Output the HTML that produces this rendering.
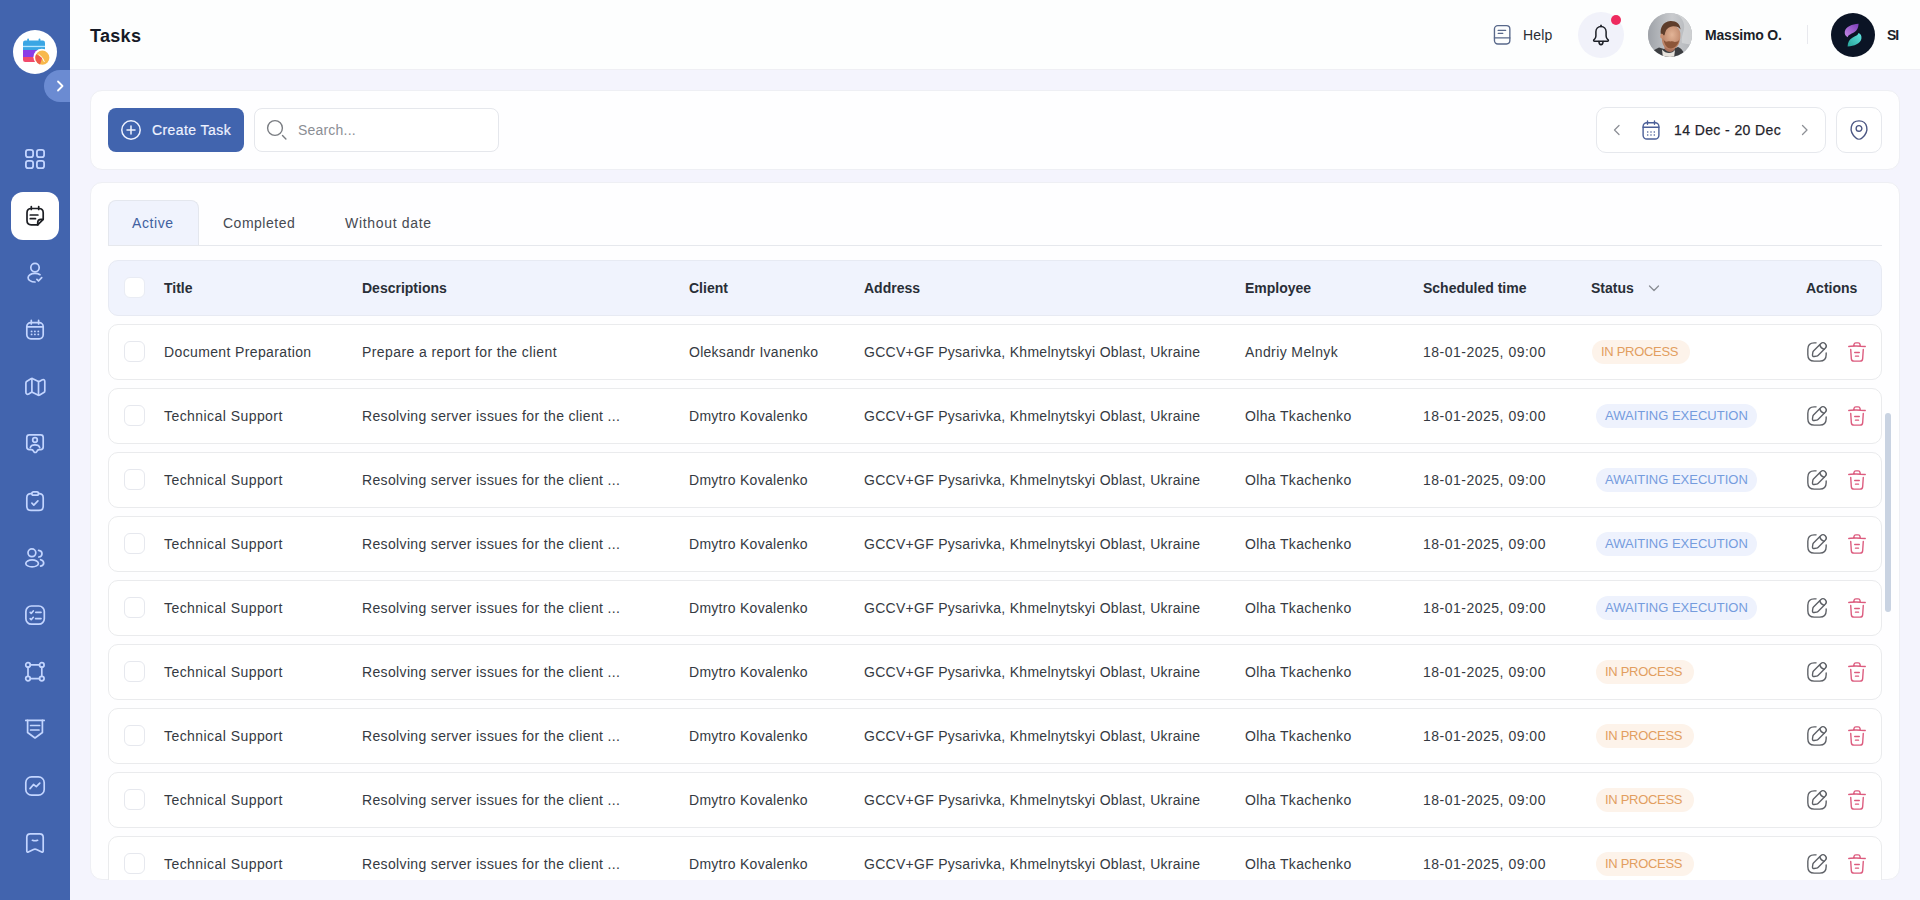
<!DOCTYPE html>
<html>
<head>
<meta charset="utf-8">
<style>
*{box-sizing:border-box;margin:0;padding:0}
html,body{width:1920px;height:900px;overflow:hidden;-webkit-font-smoothing:antialiased}
body{font-family:"Liberation Sans",sans-serif;background:#f4f4fd;position:relative;color:#2b2f36}
.abs{position:absolute}
svg{display:block;overflow:visible}
/* sidebar */
#sb{position:absolute;left:0;top:0;width:70px;height:900px;background:#4264ae}
#logo{position:absolute;left:13px;top:30px;width:44px;height:44px;border-radius:50%;background:#fff}
#tog{position:absolute;left:44px;top:70px;width:26px;height:32px;border-radius:16px 0 0 16px;background:#6b8bd2}
.nav{position:absolute;left:23px;width:24px;height:24px}
#act{position:absolute;left:11px;top:192px;width:48px;height:48px;border-radius:12px;background:#fff}
/* header */
#hd{position:absolute;left:70px;top:0;width:1850px;height:70px;background:#fdfefe;border-bottom:1px solid #efeff4}
.t{position:absolute;white-space:nowrap;line-height:20px}
/* cards */
.card{position:absolute;background:#fefeff;border:1px solid #eeeff4;border-radius:12px}
.btn{position:absolute;border-radius:8px}
.row{position:absolute;left:108px;width:1774px;height:56px;border:1px solid #eaebed;border-radius:10px;background:#fff}
.cb{position:absolute;left:15px;top:16px;width:21px;height:21px;border:1px solid #e6e8ee;border-radius:6px;background:#fff}
.cell{position:absolute;top:17px;line-height:20px;font-size:14px;letter-spacing:.35px;color:#353a42;white-space:nowrap}
.hcell{position:absolute;top:17px;line-height:20px;font-size:14px;font-weight:700;color:#292e37;white-space:nowrap}
.badge{position:absolute;top:15px;height:24px;border-radius:12px;font-size:13px;line-height:24px;white-space:nowrap}
.inp{background:#fdf3ea;color:#e29e60;letter-spacing:-.3px}
.awt{background:#eef2fd;color:#759cdd}
.ed{position:absolute;left:1697px;top:16px;width:22px;height:22px}
.dl{position:absolute;left:1737px;top:16px;width:22px;height:22px}
</style>
</head>
<body>

<!-- SIDEBAR -->
<div id="sb">
  <div id="logo">
    <svg width="44" height="44" viewBox="0 0 44 44">
      <clipPath id="calclip"><rect x="10" y="10.5" width="22" height="21.5" rx="2.2"/></clipPath>
      <g clip-path="url(#calclip)">
        <rect x="10" y="10" width="22" height="10" fill="#3aa6e4"/>
        <rect x="10" y="20" width="22" height="7" fill="#8b3de6"/>
        <rect x="10" y="27" width="22" height="6" fill="#f24a6c"/>
        <rect x="10" y="15.8" width="22" height="1.3" fill="#b4e6ff"/>
      </g>
      <rect x="14.2" y="8.6" width="1.8" height="4.4" rx=".9" fill="#3aa6e4"/>
      <rect x="25.6" y="8.6" width="1.8" height="4.4" rx=".9" fill="#3aa6e4"/>
      <circle cx="28.8" cy="27.2" r="8.4" fill="#fff"/>
      <circle cx="29.3" cy="27.7" r="7.1" fill="#f8b94c"/>
      <path d="M29.3 27.7 L23.2 24.2 A7.1 7.1 0 0 0 27 34.4 Z" fill="#ee5b4b"/>
      <path d="M25.8 24.5 L29.3 27.7 L31.2 31.5" stroke="#fff" stroke-width="1" fill="none" stroke-linecap="round"/>
    </svg>
  </div>
  <div id="tog">
    <svg width="26" height="32" viewBox="0 0 26 32"><path d="M14 11.5 L18.5 16 L14 20.5" stroke="#fff" stroke-width="1.8" fill="none" stroke-linecap="round" stroke-linejoin="round"/></svg>
  </div>
  <div id="act"></div>
  <!-- grid -->
  <svg class="nav" style="top:147px" viewBox="0 0 24 24" fill="none" stroke="#c3d5ff" stroke-width="1.8">
    <rect x="2.9" y="2.9" width="7.2" height="7.2" rx="2.2"/><rect x="13.9" y="2.9" width="7.2" height="7.2" rx="2.2"/>
    <rect x="2.9" y="13.9" width="7.2" height="7.2" rx="2.2"/><rect x="13.9" y="13.9" width="7.2" height="7.2" rx="2.2"/>
  </svg>
  <!-- tasks (active) -->
  <svg class="nav" style="top:204px" viewBox="0 0 24 24" fill="none" stroke="#1d1f24" stroke-width="1.7" stroke-linecap="round" stroke-linejoin="round">
    <path d="M8.3 2.6v2.8M15.7 2.6v2.8"/>
    <path d="M20.2 15.3V8.7c0-2.7-1.5-4.2-4.2-4.2H8.2C5.5 4.5 4 6 4 8.7v7.9c0 2.7 1.5 4.3 4.2 4.3h6.5"/>
    <path d="M20.2 15.3l-5.5 5.6v-2.2c0-2 1.3-3.4 3.3-3.4z"/>
    <path d="M7.3 11h7.6M7.3 14.7h5.2"/>
  </svg>
  <!-- user tick -->
  <svg class="nav" style="top:261px" viewBox="0 0 24 24" fill="none" stroke="#c3d5ff" stroke-width="1.7" stroke-linecap="round" stroke-linejoin="round">
    <circle cx="12" cy="6.6" r="4.2"/>
    <path d="M12 21c-1.9 0-3.7-.5-5.1-1.4-2.4-1.6-2.4-4.3 0-5.9 2.8-1.8 7.3-1.8 10.1 0"/>
    <path d="M13.9 18.3l1.6 1.7 3.2-3.4"/>
  </svg>
  <!-- calendar -->
  <svg class="nav" style="top:318px" viewBox="0 0 24 24" fill="none" stroke="#c3d5ff" stroke-width="1.7" stroke-linecap="round" stroke-linejoin="round">
    <rect x="3.8" y="4.6" width="16.4" height="16.2" rx="4"/>
    <path d="M3.8 8.9h16.4M8.3 2.4v3.6M15.6 2.4v3.6"/>
    <path d="M8.6 13.4h.01M11.9 13.4h.01M15.3 13.4h.01M8.6 16.4h.01M11.9 16.4h.01M15.3 16.4h.01" stroke-width="1.9"/>
  </svg>
  <!-- map -->
  <svg class="nav" style="top:375px" viewBox="0 0 24 24" fill="none" stroke="#c3d5ff" stroke-width="1.7" stroke-linecap="round" stroke-linejoin="round">
    <path d="M2.9 7.9v9.3c0 1.8 1.3 2.6 2.9 1.7l2.2-1.3c.5-.3 1.3-.3 1.8-.1l5.1 2.6c.5.3 1.3.2 1.8-.1l4.1-2.4c.5-.3 1-1 1-1.7V6.6c0-1.8-1.3-2.6-2.9-1.7l-2.2 1.3c-.5.3-1.3.3-1.8.1L9.8 3.7c-.5-.3-1.3-.2-1.8.1L3.9 6.2c-.5.3-1 1-1 1.7z"/>
    <path d="M8.9 3.9v13.3M15.5 6.5v13.6"/>
  </svg>
  <!-- contact -->
  <svg class="nav" style="top:432px" viewBox="0 0 24 24" fill="none" stroke="#c3d5ff" stroke-width="1.7" stroke-linecap="round" stroke-linejoin="round">
    <path d="M6.4 2.9h11.2c1.6 0 2.6 1 2.6 2.6v9.5c0 1.6-1 2.6-2.6 2.6h-1.5c-.7 0-1.2.3-1.6.8l-1.1 1.5c-.6.8-1.7.8-2.3 0l-1.1-1.5c-.4-.5-.9-.8-1.6-.8H6.4c-1.6 0-2.6-1-2.6-2.6V5.5c0-1.6 1-2.6 2.6-2.6z"/>
    <circle cx="12" cy="8" r="2.3"/>
    <path d="M7.3 15.6c.4-1.8 2.3-2.8 4.7-2.8s4.3 1 4.7 2.8"/>
  </svg>
  <!-- clipboard -->
  <svg class="nav" style="top:489px" viewBox="0 0 24 24" fill="none" stroke="#c3d5ff" stroke-width="1.7" stroke-linecap="round" stroke-linejoin="round">
    <path d="M8.5 4.6H8C5.3 4.6 3.8 6.1 3.8 8.8v8.4c0 2.7 1.5 4.2 4.2 4.2h8c2.7 0 4.2-1.5 4.2-4.2V8.8c0-2.7-1.5-4.2-4.2-4.2h-.5"/>
    <rect x="8.8" y="2.8" width="6.8" height="3.4" rx="1.7"/>
    <path d="M8.9 14.2l1.9 1.9 4.1-4.3"/>
  </svg>
  <!-- users -->
  <svg class="nav" style="top:546px" viewBox="0 0 24 24" fill="none" stroke="#c3d5ff" stroke-width="1.7" stroke-linecap="round" stroke-linejoin="round">
    <circle cx="8.9" cy="6.8" r="3.9"/>
    <ellipse cx="9.1" cy="17.4" rx="6.3" ry="3.5"/>
    <path d="M15.6 4.4c2.1.3 3.4 1.6 3.4 3.3s-1.3 3-3.2 3.3"/>
    <path d="M17.6 13.7c1.9.5 3.1 1.7 3.1 3.2s-1.2 2.7-3.1 3.2"/>
  </svg>
  <!-- checklist -->
  <svg class="nav" style="top:603px" viewBox="0 0 24 24" fill="none" stroke="#c3d5ff" stroke-width="1.7" stroke-linecap="round" stroke-linejoin="round">
    <rect x="2.9" y="3" width="18.4" height="18.2" rx="5.5"/>
    <path d="M12.8 9.3h5.2M12.6 15.6h5.4M7.2 9.4l1 1 2.1-2.4M7.2 15.7l1 1 2.1-2.4"/>
  </svg>
  <!-- shape -->
  <svg class="nav" style="top:660px" viewBox="0 0 24 24" fill="none" stroke="#c3d5ff" stroke-width="1.7" stroke-linecap="round" stroke-linejoin="round">
    <circle cx="5" cy="4.9" r="2.3"/><circle cx="18.8" cy="4.9" r="2.3"/>
    <circle cx="5" cy="18.6" r="2.3"/><circle cx="18.8" cy="18.6" r="2.3"/>
    <path d="M7.3 4.9h9.2M7.3 18.6h9.2M5 7.2v9.1M18.8 7.2v9.1"/>
  </svg>
  <!-- badge -->
  <svg class="nav" style="top:717px" viewBox="0 0 24 24" fill="none" stroke="#c3d5ff" stroke-width="1.7" stroke-linecap="round" stroke-linejoin="round">
    <path d="M2.8 3.4h18.4"/>
    <path d="M4.6 3.4v12.1l7.4 5.5 7.4-5.5V3.4"/>
    <path d="M7.6 8.5h9M7.6 13h8.4"/>
  </svg>
  <!-- chart -->
  <svg class="nav" style="top:774px" viewBox="0 0 24 24" fill="none" stroke="#c3d5ff" stroke-width="1.7" stroke-linecap="round" stroke-linejoin="round">
    <rect x="2.8" y="2.8" width="18.4" height="18.4" rx="5.8"/>
    <path d="M7 14.6l3.5-4.1 2.8 2.2 3.5-3.5"/>
  </svg>
  <!-- bookmark -->
  <svg class="nav" style="top:831px" viewBox="0 0 24 24" fill="none" stroke="#c3d5ff" stroke-width="1.7" stroke-linecap="round" stroke-linejoin="round">
    <path d="M7.3 2.8h9.4c2.3 0 3.5 1.2 3.5 3.5v13.8c0 .9-.7 1.3-1.5.9l-5.2-2.6c-1-.5-2-.5-3 0l-5.2 2.6c-.8.4-1.5 0-1.5-.9V6.3c0-2.3 1.2-3.5 3.5-3.5z"/>
    <path d="M9.4 9.3c1.7.6 3.5.6 5.2 0"/>
  </svg>
</div>

<!-- HEADER -->
<div id="hd">
  <div class="t" style="left:20px;top:26px;font-size:18px;font-weight:700;color:#161a26;letter-spacing:.3px">Tasks</div>
  <!-- help -->
  <svg class="abs" style="left:1422px;top:23px" width="24" height="24" viewBox="0 0 24 24" fill="none" stroke="#58688a" stroke-width="1.35" stroke-linecap="round">
    <rect x="2.45" y="2.65" width="15.4" height="18.3" rx="3.4"/>
    <path d="M2.45 14.9h15.4M6.2 7.4h7.4M6.2 10.3h4.6"/>
  </svg>
  <div class="t" style="left:1453px;top:25px;font-size:14px;color:#2a2d33;letter-spacing:.2px">Help</div>
  <!-- bell -->
  <div class="abs" style="left:1508px;top:12px;width:46px;height:46px;border-radius:50%;background:#f1f2fa"></div>
  <svg class="abs" style="left:1519px;top:23px" width="24" height="24" viewBox="0 0 24 24" fill="none" stroke="#1c1f26" stroke-width="1.5" stroke-linecap="round" stroke-linejoin="round">
    <path d="M12 2.2v1.2"/>
    <path d="M12 3.4c-2.9 0-5.1 2.4-5.1 5.4v4.3c0 1.1-.4 2.1-1.2 2.9l-.8.8c-.6.6-.2 1.4.6 1.4h13c.8 0 1.2-.8.6-1.4l-.8-.8c-.8-.8-1.2-1.8-1.2-2.9V8.8c0-3-2.2-5.4-5.1-5.4z"/>
    <path d="M9.9 18.4c.1 1.9 1 3.4 2.1 3.4s2-1.5 2.1-3.4"/>
  </svg>
  <div class="abs" style="left:1541px;top:15px;width:10px;height:10px;border-radius:50%;background:#ee2a5e"></div>
  <!-- avatar -->
  <div class="abs" style="left:1578px;top:13px;width:44px;height:44px;border-radius:50%;overflow:hidden;background:#b9bcc0">
    <svg width="44" height="44" viewBox="0 0 44 44">
      <defs>
        <linearGradient id="av" x1="0" y1="0" x2="1" y2="0"><stop offset="0" stop-color="#9ea2a8"/><stop offset=".55" stop-color="#c9cbce"/><stop offset="1" stop-color="#b2b5b9"/></linearGradient>
        <radialGradient id="face" cx=".55" cy=".4" r=".6"><stop offset="0" stop-color="#e2b497"/><stop offset="1" stop-color="#b98064"/></radialGradient>
      </defs>
      <rect width="44" height="44" fill="url(#av)"/>
      <path d="M30 2c4 3 7 8 6 14-1 5-3 9-2 14l10 2V0z" fill="#d8dadc" opacity=".7"/>
      <path d="M2 44c1-5 5-8 9-9.5l5 1.5h9l5-2c3 1 6 4 7 10z" fill="#3c3e41"/>
      <path d="M14 36.5c2 2.5 4.5 3.5 7 3.5s4.5-1 6-3l-1 8H15z" fill="#e6e2dc"/>
      <path d="M16.5 30v6c1.5 2 3.5 3 5.5 3s3.8-1 5-3v-6z" fill="#a8705a"/>
      <path d="M13.8 20c0-5 3.5-8 9-8 5 0 9 3 9.5 8 .3 4-.2 8-1.5 11-1.5 3.5-4.5 5.5-8 5.5-4 0-7-2.5-8.2-6-.8-2.8-.8-6.5-.8-10.5z" fill="url(#face)"/>
      <path d="M15.5 26c.5 4.5 3 9.5 7.3 9.5 4 0 7.5-3.5 8.5-9-.8 1.8-2.5 2.5-4.5 2.5-1.5-.8-3-1-4.3-.5-1.5-.5-3-.5-4.5.3-1.2-.5-2-1.5-2.5-2.8z" fill="#8c5639"/>
      <path d="M12.8 21c-1-6 2.2-12.5 9.5-13 6-.3 10 3.2 10.2 8.5-1.5-2.5-4.2-3.5-7.5-3.3-3.2.3-5.5 1.8-6.8 3.8-.7 1.3-1.3 3-1.5 4.5-.3 1-.8 1.2-1.5.5z" fill="#5e3d2b"/>
      <ellipse cx="13.8" cy="23" rx="1.6" ry="2.6" fill="#c88f72"/>
    </svg>
  </div>
  <div class="t" style="left:1635px;top:25px;font-size:14px;font-weight:700;color:#1b1f29;letter-spacing:-.2px">Massimo O.</div>
  <div class="abs" style="left:1737px;top:25px;width:1px;height:19px;background:#e8e9ee"></div>
  <!-- org -->
  <div class="abs" style="left:1761px;top:13px;width:44px;height:44px;border-radius:50%;background:#0b1425">
    <svg width="44" height="44" viewBox="0 0 44 44">
      <defs>
        <linearGradient id="sp" x1="1" y1="0" x2="0" y2="1"><stop offset="0" stop-color="#7a3db8"/><stop offset="1" stop-color="#c58ae6"/></linearGradient>
        <linearGradient id="st" x1="0" y1="1" x2="1" y2="0"><stop offset="0" stop-color="#27a39a"/><stop offset="1" stop-color="#62e6e2"/></linearGradient>
      </defs>
      <path d="M27.6 10.8C21 11.3 14.8 13.5 13.8 18.6C13.3 21.2 14.5 23.5 16.9 24.2C16.8 22.2 19.6 21.3 23.2 19.3C26.2 17.5 27.4 14.5 27.6 10.8Z" fill="url(#sp)"/>
      <path d="M16.6 33.5C23.2 33 29.4 30.8 30.4 25.7C30.9 23.1 29.7 20.8 27.3 20.1C27.4 22.1 24.6 23 21 25C18 26.8 16.8 29.8 16.6 33.5Z" fill="url(#st)"/>
    </svg>
  </div>
  <div class="t" style="left:1817px;top:25px;font-size:14px;font-weight:700;color:#1b1f29;letter-spacing:-1.2px">SI</div>
</div>

<!-- TOOLBAR CARD -->
<div class="card" style="left:90px;top:90px;width:1810px;height:80px"></div>
<div class="btn" style="left:108px;top:108px;width:136px;height:44px;background:#4164ae"></div>
<svg class="abs" style="left:120px;top:119px" width="22" height="22" viewBox="0 0 22 22" fill="none" stroke="#eef2ff" stroke-width="1.5" stroke-linecap="round">
  <circle cx="11" cy="11" r="9.2"/><path d="M11 7v8M7 11h8"/>
</svg>
<div class="t" style="left:152px;top:120px;font-size:14px;color:#eef2ff;letter-spacing:.42px;-webkit-text-stroke:.2px #eef2ff">Create Task</div>
<div class="btn" style="left:254px;top:108px;width:245px;height:44px;background:#fff;border:1px solid #e5e7ec"></div>
<svg class="abs" style="left:264px;top:117px" width="26" height="26" viewBox="0 0 26 26" fill="none" stroke="#7a7d82" stroke-width="1.4" stroke-linecap="round">
  <circle cx="11" cy="11" r="7.4"/><path d="M18.5 18.6l3.4 3.5"/>
</svg>
<div class="t" style="left:298px;top:120px;font-size:14px;color:#8b8e94;letter-spacing:.2px">Search...</div>

<div class="btn" style="left:1596px;top:107px;width:230px;height:46px;background:#fff;border:1px solid #e6e8ed;border-radius:10px"></div>
<svg class="abs" style="left:1609px;top:122px" width="16" height="16" viewBox="0 0 16 16" fill="none" stroke="#8d9096" stroke-width="1.3" stroke-linecap="round" stroke-linejoin="round"><path d="M10 3.5L5.5 8l4.5 4.5"/></svg>
<svg class="abs" style="left:1639px;top:118px" width="24" height="24" viewBox="0 0 24 24" fill="none" stroke="#4b5f98" stroke-width="1.4" stroke-linecap="round" stroke-linejoin="round">
  <rect x="4.1" y="4.7" width="15.8" height="16.3" rx="3.8"/>
  <path d="M4.1 9.3h15.8M8.5 2.9v3.4M15.5 2.9v3.4"/>
  <path d="M8.7 14h.01M12 14h.01M15.3 14h.01M8.7 17h.01M12 17h.01M15.3 17h.01" stroke-width="1.6"/>
</svg>
<div class="t" style="left:1674px;top:120px;font-size:14px;color:#1f232b;letter-spacing:.4px;-webkit-text-stroke:.25px #1f232b">14 Dec - 20 Dec</div>
<svg class="abs" style="left:1797px;top:122px" width="16" height="16" viewBox="0 0 16 16" fill="none" stroke="#8d9096" stroke-width="1.3" stroke-linecap="round" stroke-linejoin="round"><path d="M5.5 3.5L10 8l-4.5 4.5"/></svg>
<div class="btn" style="left:1836px;top:107px;width:46px;height:46px;background:#fff;border:1px solid #e6e8ed;border-radius:10px"></div>
<svg class="abs" style="left:1848px;top:119px" width="22" height="22" viewBox="0 0 24 24" fill="none" stroke="#4a5582" stroke-width="1.5">
  <path d="M12 13.43a3.12 3.12 0 100-6.24 3.12 3.12 0 000 6.24z"/>
  <path d="M3.62 8.49c1.97-8.66 14.8-8.65 16.76.01 1.15 5.08-2.01 9.38-4.78 12.04a5.193 5.193 0 01-7.21 0c-2.76-2.66-5.920-6.970-4.770-12.050z"/>
</svg>

<!-- TABLE CARD -->
<div class="card" id="tcard" style="left:90px;top:182px;width:1810px;height:698px;overflow:hidden">
</div>
<div id="tabs">
  <div class="abs" style="left:108px;top:200px;width:91px;height:46px;background:#f0f3fd;border:1px solid #e4e7ee;border-bottom:none;border-radius:8px 8px 0 0"></div>
  <div class="abs" style="left:108px;top:245px;width:1774px;height:1px;background:#e6e8ed"></div>
  <div class="t" style="left:132px;top:213px;font-size:14px;color:#41609f;letter-spacing:.6px">Active</div>
  <div class="t" style="left:223px;top:213px;font-size:14px;color:#464a52;letter-spacing:.5px">Completed</div>
  <div class="t" style="left:345px;top:213px;font-size:14px;color:#464a52;letter-spacing:.68px">Without date</div>
</div>

<div id="tbl" class="abs" style="left:0;top:0;width:1920px;height:880px;overflow:hidden">
  <div class="row" style="top:260px;background:#f0f3fd;border-color:#e7eaf3">
    <div class="cb" style="border-color:#e9ecf4"></div>
    <div class="hcell" style="left:55px">Title</div>
    <div class="hcell" style="left:253px">Descriptions</div>
    <div class="hcell" style="left:580px">Client</div>
    <div class="hcell" style="left:755px">Address</div>
    <div class="hcell" style="left:1136px">Employee</div>
    <div class="hcell" style="left:1314px">Scheduled time</div>
    <div class="hcell" style="left:1482px">Status</div>
    <svg class="abs" style="left:1538px;top:22px" width="14" height="10" viewBox="0 0 14 10" fill="none" stroke="#8a8d94" stroke-width="1.3" stroke-linecap="round" stroke-linejoin="round"><path d="M2.5 3l4.5 4.5L11.5 3"/></svg>
    <div class="hcell" style="left:1697px">Actions</div>
  </div>
  <div class="row" style="top:324px"><div class="cb"></div>
<div class="cell" style="left:55px;letter-spacing:0.37px">Document Preparation</div><div class="cell" style="left:253px;letter-spacing:0.417px">Prepare a report for the client</div><div class="cell" style="left:580px;letter-spacing:0.27px">Oleksandr Ivanenko</div>
<div class="cell" style="left:755px;letter-spacing:.278px">GCCV+GF Pysarivka, Khmelnytskyi Oblast, Ukraine</div><div class="cell" style="left:1136px;letter-spacing:0.4px">Andriy Melnyk</div>
<div class="cell" style="left:1314px;letter-spacing:.5px">18-01-2025, 09:00</div><div class="badge inp" style="left:1483px;width:98px;padding-left:9px">IN PROCESS</div><svg class="ed" viewBox="0 0 24 24" fill="none" stroke="#5d6066" stroke-width="1.5" stroke-linecap="round" stroke-linejoin="round"><path d="M11 2H9C4 2 2 4 2 9v6c0 5 2 7 7 7h6c5 0 7-2 7-7v-2"/><path d="M16.04 3.02L8.16 10.9c-.3.3-.6.89-.66 1.32l-.43 3.01c-.16 1.09.61 1.85 1.7 1.7l3.01-.43c.42-.06 1.01-.36 1.32-.66l7.88-7.88c1.36-1.36 2-2.94 0-4.94-2-2-3.58-1.36-4.94 0z"/><path d="M14.91 4.15a7.144 7.144 0 004.94 4.94"/></svg><svg class="dl" viewBox="0 0 24 24" fill="none" stroke="#dc5b7e" stroke-width="1.5" stroke-linecap="round" stroke-linejoin="round"><path d="M21 5.98c-3.33-.33-6.68-.5-10.02-.5-1.98 0-3.96.1-5.94.3L3 5.98M8.5 4.97l.22-1.31C8.88 2.71 9 2 10.69 2h2.62c1.69 0 1.82.75 1.97 1.67l.22 1.3M18.85 9.14l-.65 10.07C18.09 20.78 18 22 15.21 22H8.79C6 22 5.91 20.78 5.8 19.21L5.15 9.14M10.33 16.5h3.33M9.5 12.5h5"/></svg></div>
<div class="row" style="top:388px"><div class="cb"></div>
<div class="cell" style="left:55px;letter-spacing:0.44px">Technical Support</div><div class="cell" style="left:253px;letter-spacing:0.35px">Resolving server issues for the client ...</div><div class="cell" style="left:580px;letter-spacing:0.28px">Dmytro Kovalenko</div>
<div class="cell" style="left:755px;letter-spacing:.278px">GCCV+GF Pysarivka, Khmelnytskyi Oblast, Ukraine</div><div class="cell" style="left:1136px;letter-spacing:0.35px">Olha Tkachenko</div>
<div class="cell" style="left:1314px;letter-spacing:.5px">18-01-2025, 09:00</div><div class="badge awt" style="left:1487px;width:161px;padding-left:9px">AWAITING EXECUTION</div><svg class="ed" viewBox="0 0 24 24" fill="none" stroke="#5d6066" stroke-width="1.5" stroke-linecap="round" stroke-linejoin="round"><path d="M11 2H9C4 2 2 4 2 9v6c0 5 2 7 7 7h6c5 0 7-2 7-7v-2"/><path d="M16.04 3.02L8.16 10.9c-.3.3-.6.89-.66 1.32l-.43 3.01c-.16 1.09.61 1.85 1.7 1.7l3.01-.43c.42-.06 1.01-.36 1.32-.66l7.88-7.88c1.36-1.36 2-2.94 0-4.94-2-2-3.58-1.36-4.94 0z"/><path d="M14.91 4.15a7.144 7.144 0 004.94 4.94"/></svg><svg class="dl" viewBox="0 0 24 24" fill="none" stroke="#dc5b7e" stroke-width="1.5" stroke-linecap="round" stroke-linejoin="round"><path d="M21 5.98c-3.33-.33-6.68-.5-10.02-.5-1.98 0-3.96.1-5.94.3L3 5.98M8.5 4.97l.22-1.31C8.88 2.71 9 2 10.69 2h2.62c1.69 0 1.82.75 1.97 1.67l.22 1.3M18.85 9.14l-.65 10.07C18.09 20.78 18 22 15.21 22H8.79C6 22 5.91 20.78 5.8 19.21L5.15 9.14M10.33 16.5h3.33M9.5 12.5h5"/></svg></div>
<div class="row" style="top:452px"><div class="cb"></div>
<div class="cell" style="left:55px;letter-spacing:0.44px">Technical Support</div><div class="cell" style="left:253px;letter-spacing:0.35px">Resolving server issues for the client ...</div><div class="cell" style="left:580px;letter-spacing:0.28px">Dmytro Kovalenko</div>
<div class="cell" style="left:755px;letter-spacing:.278px">GCCV+GF Pysarivka, Khmelnytskyi Oblast, Ukraine</div><div class="cell" style="left:1136px;letter-spacing:0.35px">Olha Tkachenko</div>
<div class="cell" style="left:1314px;letter-spacing:.5px">18-01-2025, 09:00</div><div class="badge awt" style="left:1487px;width:161px;padding-left:9px">AWAITING EXECUTION</div><svg class="ed" viewBox="0 0 24 24" fill="none" stroke="#5d6066" stroke-width="1.5" stroke-linecap="round" stroke-linejoin="round"><path d="M11 2H9C4 2 2 4 2 9v6c0 5 2 7 7 7h6c5 0 7-2 7-7v-2"/><path d="M16.04 3.02L8.16 10.9c-.3.3-.6.89-.66 1.32l-.43 3.01c-.16 1.09.61 1.85 1.7 1.7l3.01-.43c.42-.06 1.01-.36 1.32-.66l7.88-7.88c1.36-1.36 2-2.94 0-4.94-2-2-3.58-1.36-4.94 0z"/><path d="M14.91 4.15a7.144 7.144 0 004.94 4.94"/></svg><svg class="dl" viewBox="0 0 24 24" fill="none" stroke="#dc5b7e" stroke-width="1.5" stroke-linecap="round" stroke-linejoin="round"><path d="M21 5.98c-3.33-.33-6.68-.5-10.02-.5-1.98 0-3.96.1-5.94.3L3 5.98M8.5 4.97l.22-1.31C8.88 2.71 9 2 10.69 2h2.62c1.69 0 1.82.75 1.97 1.67l.22 1.3M18.85 9.14l-.65 10.07C18.09 20.78 18 22 15.21 22H8.79C6 22 5.91 20.78 5.8 19.21L5.15 9.14M10.33 16.5h3.33M9.5 12.5h5"/></svg></div>
<div class="row" style="top:516px"><div class="cb"></div>
<div class="cell" style="left:55px;letter-spacing:0.44px">Technical Support</div><div class="cell" style="left:253px;letter-spacing:0.35px">Resolving server issues for the client ...</div><div class="cell" style="left:580px;letter-spacing:0.28px">Dmytro Kovalenko</div>
<div class="cell" style="left:755px;letter-spacing:.278px">GCCV+GF Pysarivka, Khmelnytskyi Oblast, Ukraine</div><div class="cell" style="left:1136px;letter-spacing:0.35px">Olha Tkachenko</div>
<div class="cell" style="left:1314px;letter-spacing:.5px">18-01-2025, 09:00</div><div class="badge awt" style="left:1487px;width:161px;padding-left:9px">AWAITING EXECUTION</div><svg class="ed" viewBox="0 0 24 24" fill="none" stroke="#5d6066" stroke-width="1.5" stroke-linecap="round" stroke-linejoin="round"><path d="M11 2H9C4 2 2 4 2 9v6c0 5 2 7 7 7h6c5 0 7-2 7-7v-2"/><path d="M16.04 3.02L8.16 10.9c-.3.3-.6.89-.66 1.32l-.43 3.01c-.16 1.09.61 1.85 1.7 1.7l3.01-.43c.42-.06 1.01-.36 1.32-.66l7.88-7.88c1.36-1.36 2-2.94 0-4.94-2-2-3.58-1.36-4.94 0z"/><path d="M14.91 4.15a7.144 7.144 0 004.94 4.94"/></svg><svg class="dl" viewBox="0 0 24 24" fill="none" stroke="#dc5b7e" stroke-width="1.5" stroke-linecap="round" stroke-linejoin="round"><path d="M21 5.98c-3.33-.33-6.68-.5-10.02-.5-1.98 0-3.96.1-5.94.3L3 5.98M8.5 4.97l.22-1.31C8.88 2.71 9 2 10.69 2h2.62c1.69 0 1.82.75 1.97 1.67l.22 1.3M18.85 9.14l-.65 10.07C18.09 20.78 18 22 15.21 22H8.79C6 22 5.91 20.78 5.8 19.21L5.15 9.14M10.33 16.5h3.33M9.5 12.5h5"/></svg></div>
<div class="row" style="top:580px"><div class="cb"></div>
<div class="cell" style="left:55px;letter-spacing:0.44px">Technical Support</div><div class="cell" style="left:253px;letter-spacing:0.35px">Resolving server issues for the client ...</div><div class="cell" style="left:580px;letter-spacing:0.28px">Dmytro Kovalenko</div>
<div class="cell" style="left:755px;letter-spacing:.278px">GCCV+GF Pysarivka, Khmelnytskyi Oblast, Ukraine</div><div class="cell" style="left:1136px;letter-spacing:0.35px">Olha Tkachenko</div>
<div class="cell" style="left:1314px;letter-spacing:.5px">18-01-2025, 09:00</div><div class="badge awt" style="left:1487px;width:161px;padding-left:9px">AWAITING EXECUTION</div><svg class="ed" viewBox="0 0 24 24" fill="none" stroke="#5d6066" stroke-width="1.5" stroke-linecap="round" stroke-linejoin="round"><path d="M11 2H9C4 2 2 4 2 9v6c0 5 2 7 7 7h6c5 0 7-2 7-7v-2"/><path d="M16.04 3.02L8.16 10.9c-.3.3-.6.89-.66 1.32l-.43 3.01c-.16 1.09.61 1.85 1.7 1.7l3.01-.43c.42-.06 1.01-.36 1.32-.66l7.88-7.88c1.36-1.36 2-2.94 0-4.94-2-2-3.58-1.36-4.94 0z"/><path d="M14.91 4.15a7.144 7.144 0 004.94 4.94"/></svg><svg class="dl" viewBox="0 0 24 24" fill="none" stroke="#dc5b7e" stroke-width="1.5" stroke-linecap="round" stroke-linejoin="round"><path d="M21 5.98c-3.33-.33-6.68-.5-10.02-.5-1.98 0-3.96.1-5.94.3L3 5.98M8.5 4.97l.22-1.31C8.88 2.71 9 2 10.69 2h2.62c1.69 0 1.82.75 1.97 1.67l.22 1.3M18.85 9.14l-.65 10.07C18.09 20.78 18 22 15.21 22H8.79C6 22 5.91 20.78 5.8 19.21L5.15 9.14M10.33 16.5h3.33M9.5 12.5h5"/></svg></div>
<div class="row" style="top:644px"><div class="cb"></div>
<div class="cell" style="left:55px;letter-spacing:0.44px">Technical Support</div><div class="cell" style="left:253px;letter-spacing:0.35px">Resolving server issues for the client ...</div><div class="cell" style="left:580px;letter-spacing:0.28px">Dmytro Kovalenko</div>
<div class="cell" style="left:755px;letter-spacing:.278px">GCCV+GF Pysarivka, Khmelnytskyi Oblast, Ukraine</div><div class="cell" style="left:1136px;letter-spacing:0.35px">Olha Tkachenko</div>
<div class="cell" style="left:1314px;letter-spacing:.5px">18-01-2025, 09:00</div><div class="badge inp" style="left:1487px;width:98px;padding-left:9px">IN PROCESS</div><svg class="ed" viewBox="0 0 24 24" fill="none" stroke="#5d6066" stroke-width="1.5" stroke-linecap="round" stroke-linejoin="round"><path d="M11 2H9C4 2 2 4 2 9v6c0 5 2 7 7 7h6c5 0 7-2 7-7v-2"/><path d="M16.04 3.02L8.16 10.9c-.3.3-.6.89-.66 1.32l-.43 3.01c-.16 1.09.61 1.85 1.7 1.7l3.01-.43c.42-.06 1.01-.36 1.32-.66l7.88-7.88c1.36-1.36 2-2.94 0-4.94-2-2-3.58-1.36-4.94 0z"/><path d="M14.91 4.15a7.144 7.144 0 004.94 4.94"/></svg><svg class="dl" viewBox="0 0 24 24" fill="none" stroke="#dc5b7e" stroke-width="1.5" stroke-linecap="round" stroke-linejoin="round"><path d="M21 5.98c-3.33-.33-6.68-.5-10.02-.5-1.98 0-3.96.1-5.94.3L3 5.98M8.5 4.97l.22-1.31C8.88 2.71 9 2 10.69 2h2.62c1.69 0 1.82.75 1.97 1.67l.22 1.3M18.85 9.14l-.65 10.07C18.09 20.78 18 22 15.21 22H8.79C6 22 5.91 20.78 5.8 19.21L5.15 9.14M10.33 16.5h3.33M9.5 12.5h5"/></svg></div>
<div class="row" style="top:708px"><div class="cb"></div>
<div class="cell" style="left:55px;letter-spacing:0.44px">Technical Support</div><div class="cell" style="left:253px;letter-spacing:0.35px">Resolving server issues for the client ...</div><div class="cell" style="left:580px;letter-spacing:0.28px">Dmytro Kovalenko</div>
<div class="cell" style="left:755px;letter-spacing:.278px">GCCV+GF Pysarivka, Khmelnytskyi Oblast, Ukraine</div><div class="cell" style="left:1136px;letter-spacing:0.35px">Olha Tkachenko</div>
<div class="cell" style="left:1314px;letter-spacing:.5px">18-01-2025, 09:00</div><div class="badge inp" style="left:1487px;width:98px;padding-left:9px">IN PROCESS</div><svg class="ed" viewBox="0 0 24 24" fill="none" stroke="#5d6066" stroke-width="1.5" stroke-linecap="round" stroke-linejoin="round"><path d="M11 2H9C4 2 2 4 2 9v6c0 5 2 7 7 7h6c5 0 7-2 7-7v-2"/><path d="M16.04 3.02L8.16 10.9c-.3.3-.6.89-.66 1.32l-.43 3.01c-.16 1.09.61 1.85 1.7 1.7l3.01-.43c.42-.06 1.01-.36 1.32-.66l7.88-7.88c1.36-1.36 2-2.94 0-4.94-2-2-3.58-1.36-4.94 0z"/><path d="M14.91 4.15a7.144 7.144 0 004.94 4.94"/></svg><svg class="dl" viewBox="0 0 24 24" fill="none" stroke="#dc5b7e" stroke-width="1.5" stroke-linecap="round" stroke-linejoin="round"><path d="M21 5.98c-3.33-.33-6.68-.5-10.02-.5-1.98 0-3.96.1-5.94.3L3 5.98M8.5 4.97l.22-1.31C8.88 2.71 9 2 10.69 2h2.62c1.69 0 1.82.75 1.97 1.67l.22 1.3M18.85 9.14l-.65 10.07C18.09 20.78 18 22 15.21 22H8.79C6 22 5.91 20.78 5.8 19.21L5.15 9.14M10.33 16.5h3.33M9.5 12.5h5"/></svg></div>
<div class="row" style="top:772px"><div class="cb"></div>
<div class="cell" style="left:55px;letter-spacing:0.44px">Technical Support</div><div class="cell" style="left:253px;letter-spacing:0.35px">Resolving server issues for the client ...</div><div class="cell" style="left:580px;letter-spacing:0.28px">Dmytro Kovalenko</div>
<div class="cell" style="left:755px;letter-spacing:.278px">GCCV+GF Pysarivka, Khmelnytskyi Oblast, Ukraine</div><div class="cell" style="left:1136px;letter-spacing:0.35px">Olha Tkachenko</div>
<div class="cell" style="left:1314px;letter-spacing:.5px">18-01-2025, 09:00</div><div class="badge inp" style="left:1487px;width:98px;padding-left:9px">IN PROCESS</div><svg class="ed" viewBox="0 0 24 24" fill="none" stroke="#5d6066" stroke-width="1.5" stroke-linecap="round" stroke-linejoin="round"><path d="M11 2H9C4 2 2 4 2 9v6c0 5 2 7 7 7h6c5 0 7-2 7-7v-2"/><path d="M16.04 3.02L8.16 10.9c-.3.3-.6.89-.66 1.32l-.43 3.01c-.16 1.09.61 1.85 1.7 1.7l3.01-.43c.42-.06 1.01-.36 1.32-.66l7.88-7.88c1.36-1.36 2-2.94 0-4.94-2-2-3.58-1.36-4.94 0z"/><path d="M14.91 4.15a7.144 7.144 0 004.94 4.94"/></svg><svg class="dl" viewBox="0 0 24 24" fill="none" stroke="#dc5b7e" stroke-width="1.5" stroke-linecap="round" stroke-linejoin="round"><path d="M21 5.98c-3.33-.33-6.68-.5-10.02-.5-1.98 0-3.96.1-5.94.3L3 5.98M8.5 4.97l.22-1.31C8.88 2.71 9 2 10.69 2h2.62c1.69 0 1.82.75 1.97 1.67l.22 1.3M18.85 9.14l-.65 10.07C18.09 20.78 18 22 15.21 22H8.79C6 22 5.91 20.78 5.8 19.21L5.15 9.14M10.33 16.5h3.33M9.5 12.5h5"/></svg></div>
<div class="row" style="top:836px"><div class="cb"></div>
<div class="cell" style="left:55px;letter-spacing:0.44px">Technical Support</div><div class="cell" style="left:253px;letter-spacing:0.35px">Resolving server issues for the client ...</div><div class="cell" style="left:580px;letter-spacing:0.28px">Dmytro Kovalenko</div>
<div class="cell" style="left:755px;letter-spacing:.278px">GCCV+GF Pysarivka, Khmelnytskyi Oblast, Ukraine</div><div class="cell" style="left:1136px;letter-spacing:0.35px">Olha Tkachenko</div>
<div class="cell" style="left:1314px;letter-spacing:.5px">18-01-2025, 09:00</div><div class="badge inp" style="left:1487px;width:98px;padding-left:9px">IN PROCESS</div><svg class="ed" viewBox="0 0 24 24" fill="none" stroke="#5d6066" stroke-width="1.5" stroke-linecap="round" stroke-linejoin="round"><path d="M11 2H9C4 2 2 4 2 9v6c0 5 2 7 7 7h6c5 0 7-2 7-7v-2"/><path d="M16.04 3.02L8.16 10.9c-.3.3-.6.89-.66 1.32l-.43 3.01c-.16 1.09.61 1.85 1.7 1.7l3.01-.43c.42-.06 1.01-.36 1.32-.66l7.88-7.88c1.36-1.36 2-2.94 0-4.94-2-2-3.58-1.36-4.94 0z"/><path d="M14.91 4.15a7.144 7.144 0 004.94 4.94"/></svg><svg class="dl" viewBox="0 0 24 24" fill="none" stroke="#dc5b7e" stroke-width="1.5" stroke-linecap="round" stroke-linejoin="round"><path d="M21 5.98c-3.33-.33-6.68-.5-10.02-.5-1.98 0-3.96.1-5.94.3L3 5.98M8.5 4.97l.22-1.31C8.88 2.71 9 2 10.69 2h2.62c1.69 0 1.82.75 1.97 1.67l.22 1.3M18.85 9.14l-.65 10.07C18.09 20.78 18 22 15.21 22H8.79C6 22 5.91 20.78 5.8 19.21L5.15 9.14M10.33 16.5h3.33M9.5 12.5h5"/></svg></div>
</div>
<!-- scrollbar -->
<div class="abs" style="left:1885px;top:413px;width:6px;height:199px;border-radius:3px;background:#c9d3e2"></div>

</body>
</html>
